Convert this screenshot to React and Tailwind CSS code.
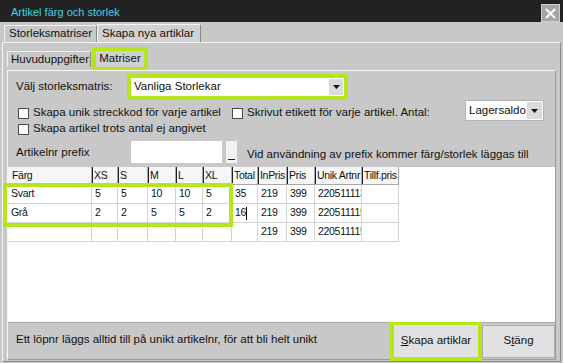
import React from "react";

const COLS = [
  { label: "Färg", w: 84 },
  { label: "XS", w: 26 },
  { label: "S", w: 30 },
  { label: "M", w: 28 },
  { label: "L", w: 27 },
  { label: "XL", w: 29 },
  { label: "Total", w: 26 },
  { label: "InPris", w: 29 },
  { label: "Pris", w: 28 },
  { label: "Unik Artnr", w: 47 },
  { label: "Tillf.pris", w: 37 },
];

const ROWS = [
  ["Svart", "5", "5", "10", "10", "5", "35", "219", "399", "2205111130", ""],
  ["Grå", "2", "2", "5", "5", "2", "16", "219", "399", "2205111150", ""],
  ["", "", "", "", "", "", "", "219", "399", "2205111150", ""],
];

const Arrow = () => (
  <svg width="7" height="4" viewBox="0 0 7 4">
    <path d="M0 0h7L3.5 4z" fill="#111" />
  </svg>
);

const Checkbox = ({ label }) => (
  <div className="flex items-center h-[14px] gap-[4px]">
    <span className="w-[11px] h-[11px] bg-white border border-[#4a4a4a] shrink-0" />
    <span className="whitespace-nowrap">{label}</span>
  </div>
);

const App = () => {
  return (
    <div className="w-[563px] h-[363px] bg-[#c8c8c8] flex flex-col overflow-hidden font-['Liberation_Sans',Arial,sans-serif] text-[11.5px] text-[#111]">
      {/* Title bar */}
      <div className="h-[22px] bg-[#222222] flex items-center justify-between pl-[11px] pr-[3px] shrink-0">
        <span className="text-[11px] text-[#3fd3e2] mt-[2px]">Artikel färg och storlek</span>
        <button className="w-[19px] h-[18px] mt-[4px] bg-[#a6a6a6] border border-[#cfcfcf] flex items-center justify-center">
          <svg width="11" height="11" viewBox="0 0 11 11">
            <path d="M1 1l9 9M10 1l-9 9" stroke="#fff" strokeWidth="2" />
          </svg>
        </button>
      </div>

      {/* Outer tabs */}
      <div className="flex items-end h-[20px] pl-[4px] shrink-0">
        <div className="h-[17px] w-[93px] px-[4px] flex items-center border-t border-l border-[#f0f0f0] border-r border-r-[#8a8a8a] bg-[#c8c8c8] whitespace-nowrap">
          Storleksmatriser
        </div>
        <div className="h-[18px] w-[104px] px-[4px] flex items-center border-t border-l border-[#f4f4f4] border-r border-r-[#8a8a8a] bg-[#d2d2d2] whitespace-nowrap">
          Skapa nya artiklar
        </div>
      </div>

      {/* Outer panel */}
      <div className="flex-1 mx-[2px] mb-[1px] border border-t-[#f4f4f4] border-l-[#f4f4f4] border-r-[#8a8a8a] border-b-[#8a8a8a] flex flex-col px-[3px] pt-[8px] pb-[1px]">
        {/* Inner tabs */}
        <div className="flex items-start h-[19px] pl-[1px] shrink-0">
          <div className="h-[16px] w-[84px] px-[3px] flex items-center border-t border-l border-[#f0f0f0] border-r border-r-[#8a8a8a] whitespace-nowrap">
            Huvuduppgifter
          </div>
          <div className="h-[16px] w-[48px] ml-[5px] flex items-center justify-center bg-[#d0d0d0] outline-4 outline-[#b5e61d] whitespace-nowrap">
            Matriser
          </div>
        </div>

        {/* Inner panel */}
        <div className="flex-1 mx-[1px] border border-t-[#f8f8f8] border-l-[#f8f8f8] border-r-[#9a9a9a] border-b-[#9a9a9a] flex flex-col">
          {/* Row 1 */}
          <div className="flex items-center pt-[7px] shrink-0">
            <span className="w-[123px] pl-[8px] whitespace-nowrap">Välj storleksmatris:</span>
            <div className="w-[213px] h-[18px] bg-white outline-4 outline-[#b5e61d] flex items-center justify-between pl-[3px] pr-[1px]">
              <span>Vanliga Storlekar</span>
              <span className="w-[14px] h-[16px] bg-[#dadada] flex items-center justify-center">
                <Arrow />
              </span>
            </div>
          </div>

          {/* Row 2 */}
          <div className="flex items-start h-[22px] mt-[4px] pl-[10px] pr-[11px] shrink-0">
            <div className="w-[214px] mt-[6px]">
              <Checkbox label="Skapa unik streckkod för varje artikel" />
            </div>
            <div className="mt-[6px]">
              <Checkbox label="Skrivut etikett för varje artikel. Antal:" />
            </div>
            <div className="ml-auto w-[79px] h-[21px] bg-white border border-[#b4b4b4] flex items-center justify-between pl-[3px] pr-[1px]">
              <span>Lagersaldo</span>
              <span className="w-[15px] h-[17px] bg-[#dadada] flex items-center justify-center">
                <Arrow />
              </span>
            </div>
          </div>

          {/* Row 3 */}
          <div className="h-[14px] pl-[10px] shrink-0">
            <Checkbox label="Skapa artikel trots antal ej angivet" />
          </div>

          {/* Row 4 */}
          <div className="flex items-center h-[22px] mt-[5px] shrink-0">
            <span className="w-[123px] pl-[8px] mt-[2px] whitespace-nowrap">Artikelnr prefix</span>
            <div className="w-[91px] h-[22px] bg-white" />
            <div className="w-[11px] h-[22px] ml-[4px] bg-[#f2f2f2] flex items-end justify-center pb-[3px]">
              <span className="w-[7px] h-[1px] bg-[#222]" />
            </div>
            <span className="ml-[10px] mt-[6px] whitespace-nowrap">
              Vid användning av prefix kommer färg/storlek läggas till
            </span>
          </div>

          {/* Grid */}
          <div className="relative h-[155px] mt-[4px] bg-white shrink-0 text-[10.5px] tracking-[-0.3px]">
            <div className="flex">
              {COLS.map((c, i) => (
                <div
                  key={c.label}
                  style={{ width: c.w }}
                  className={`h-[18px] flex items-center bg-[#f6f6f6] border-r border-b border-[#a8a8a8] whitespace-nowrap overflow-hidden ${
                    i === 0 ? "pl-[4px]" : ""
                  }`}
                >
                  {i > 0 && <span className="w-px h-full bg-[#1c1c2c] mr-[1px] shrink-0" />}
                  {c.label}
                </div>
              ))}
            </div>
            {ROWS.map((r, ri) => (
              <div key={ri} className="flex">
                {r.map((v, ci) => (
                  <div
                    key={ci}
                    style={{ width: COLS[ci].w }}
                    className="h-[19px] flex items-center pl-[3px] border-r border-b border-[#d4d4d4] whitespace-nowrap overflow-hidden"
                  >
                    {v}
                    {ri === 1 && ci === 6 && <span className="w-px h-[13px] bg-black" />}
                  </div>
                ))}
              </div>
            ))}
            <div className="absolute left-[-5px] top-[16px] w-[230px] h-[44px] border-4 border-[#b5e61d] pointer-events-none" />
          </div>

          {/* Status bar */}
          <div className="flex-1 flex items-center border-t border-[#a8a8a8] pl-[8px]">
            <span className="whitespace-nowrap mt-[-3px]">
              Ett löpnr läggs alltid till på unikt artikelnr, för att bli helt unikt
            </span>
            <button className="ml-auto w-[84px] h-[32px] bg-[#e1e1e1] outline-4 outline-[#b5e61d] flex items-center justify-center">
              <span>
                <span className="underline">S</span>kapa artiklar
              </span>
            </button>
            <button className="ml-[4px] w-[73px] h-[33px] bg-[#e1e1e1] border border-[#adadad] flex items-center justify-center">
              <span>
                S<span className="underline">t</span>äng
              </span>
            </button>
          </div>
        </div>
      </div>
    </div>
  );
};

export default App;
